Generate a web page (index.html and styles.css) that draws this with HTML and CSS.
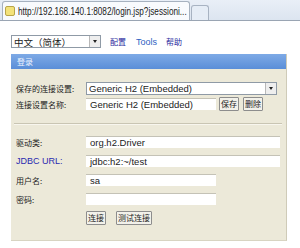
FILE: index.html
```html
<!DOCTYPE html>
<html lang="zh">
<head>
<meta charset="utf-8">
<link rel="stylesheet" href="styles.css">
</head>
<body>
<div class="chrome">
  <div class="tab">
    <span class="favicon"></span>
    <span class="tab-title">http://192.168.140.1:8082/login.jsp?jsessioni...</span>
  </div>
  <div class="newtab"></div>
</div>
<div class="page">
  <div class="toolbar">
    <div class="select lang"><span class="sel-text cjk">中文（简体）</span><span class="arrow"></span></div>
    <a class="link cjk">配置</a>
    <a class="link tools">Tools</a>
    <a class="link cjk help">帮助</a>
  </div>
  <div class="panel">
    <div class="panel-head cjk">登录</div>
    <div class="panel-body">
      <div class="row r-first">
        <span class="label cjk">保存的连接设置:</span>
        <div class="select wide"><span class="sel-text">Generic H2 (Embedded)</span><span class="arrow"></span></div>
      </div>
      <div class="row">
        <span class="label cjk">连接设置名称:</span>
        <div class="input mid">Generic H2 (Embedded)</div>
        <button class="btn cjk">保存</button>
        <button class="btn cjk">删除</button>
      </div>
      <div class="sep"></div>
      <div class="row">
        <span class="label cjk">驱动类:</span>
        <div class="input long">org.h2.Driver</div>
      </div>
      <div class="row">
        <span class="label blue">JDBC URL:</span>
        <div class="input long">jdbc:h2:~/test</div>
      </div>
      <div class="row">
        <span class="label cjk">用户名:</span>
        <div class="input mid">sa</div>
      </div>
      <div class="row">
        <span class="label cjk">密码:</span>
        <div class="input mid"></div>
      </div>
      <div class="row">
        <span class="label"></span>
        <button class="btn cjk">连接</button>
        <button class="btn cjk btn-test">测试连接</button>
      </div>
    </div>
  </div>
</div>
</body>
</html>
```
FILE: styles.css
```css
* { box-sizing: border-box; }
html, body { margin: 0; padding: 0; background: #fff; }
body {
  width: 300px;
  height: 248px;
  overflow: hidden;
  font-family: "Liberation Sans", "Noto Sans CJK SC", sans-serif;
  font-size: 10px;
  color: #222;
}
.cjk { font-family: "Noto Sans CJK SC", sans-serif; font-size: 8px; }

.chrome {
  height: 21px;
  background: linear-gradient(#e9eff7, #dce5f0);
  border-bottom: 1px solid #9aa5b3;
  display: flex;
  align-items: flex-end;
  padding-left: 2px;
}
.tab {
  width: 188px;
  height: 19px;
  background: #f8fafd;
  border: 1px solid #a6b1bf;
  border-bottom: none;
  border-radius: 3px 3px 0 0;
  display: flex;
  align-items: center;
  padding-left: 2px;
  gap: 3px;
  overflow: hidden;
  white-space: nowrap;
}
.favicon {
  width: 10px;
  height: 10px;
  background: #f3e27a;
  border: 1px solid #b8a54a;
  border-radius: 2px;
  flex: none;
}
.tab-title {
  display: inline-block;
  font-size: 10px;
  color: #1a1a1a;
  transform: scaleX(0.82);
  transform-origin: left center;
}
.newtab {
  width: 18px;
  height: 15px;
  margin-left: 1px;
  background: #e6edf6;
  border: 1px solid #a8b3c2;
  border-bottom: none;
  border-radius: 3px 3px 0 0;
}

.page { padding: 14px 0 0 11px; }
.toolbar { display: flex; align-items: center; height: 13px; }
.select {
  height: 13px;
  background: #fff;
  border: 1px solid #8f9aa6;
  display: flex;
  align-items: center;
  justify-content: space-between;
  padding-left: 2px;
}
.lang { width: 90px; }
.sel-text { white-space: nowrap; }
.arrow {
  width: 11px;
  height: 11px;
  background: #eeeeee;
  border-left: 1px solid #b8b8b8;
  position: relative;
  flex: none;
}
.arrow::after {
  content: "";
  position: absolute;
  left: 3px;
  top: 4px;
  border-left: 2.5px solid transparent;
  border-right: 2.5px solid transparent;
  border-top: 3px solid #222;
}
.link { color: #2a2aa0; margin-left: 9px; }
.link.tools { color: #2f5fc2; font-size: 9px; margin-left: 10px; }
.link.help { margin-left: 9px; }

.panel {
  margin-top: 6px;
  width: 276px;
  height: 187px;
  background: #ece9d9;
  border-right: 1px solid #cfcbb8;
  border-bottom: 1px solid #d8d4c2;
}
.panel-head {
  height: 15px;
  background: linear-gradient(#7eaae6, #5a8ed8);
  color: #eef4ff;
  padding-left: 6px;
  line-height: 15px;
}
.panel-body { padding: 12px 0 0 5px; display: flex; flex-direction: column; gap: 5px; }
.panel-body .row:nth-child(2) { margin-top: -3px; }
.row { display: flex; align-items: center; height: 14px; }
.label { width: 70px; flex: none; white-space: nowrap; }
.label.blue { color: #2a2ab0; font-size: 9px; }
.wide { width: 191px; height: 13px; }
.sel-text { font-size: 9.5px; }
.input {
  height: 12px;
  background: #fff;
  border-top: 1px solid #c4c2b6;
  padding-left: 4px;
  line-height: 11px;
  white-space: nowrap;
  font-size: 9.5px;
}
.mid { width: 130px; }
.long { width: 194px; }
.btn {
  height: 14px;
  padding: 0 1px;
  margin: 0 0 0 3px;
  background: #f2f1ea;
  border: 1px solid #8d8d8d;
  border-radius: 1px;
  color: #222;
  line-height: 12px;
}
.btn + .btn { margin-left: 4px; }
.row .label + .btn { margin-left: 0; }
.btn-test { margin-left: 10px !important; }
.sep {
  height: 1px;
  margin: 7px 4px 6px -2px;
  background: #c9c5b3;
  box-shadow: 0 1px 0 #f8f6ee;
}
```
